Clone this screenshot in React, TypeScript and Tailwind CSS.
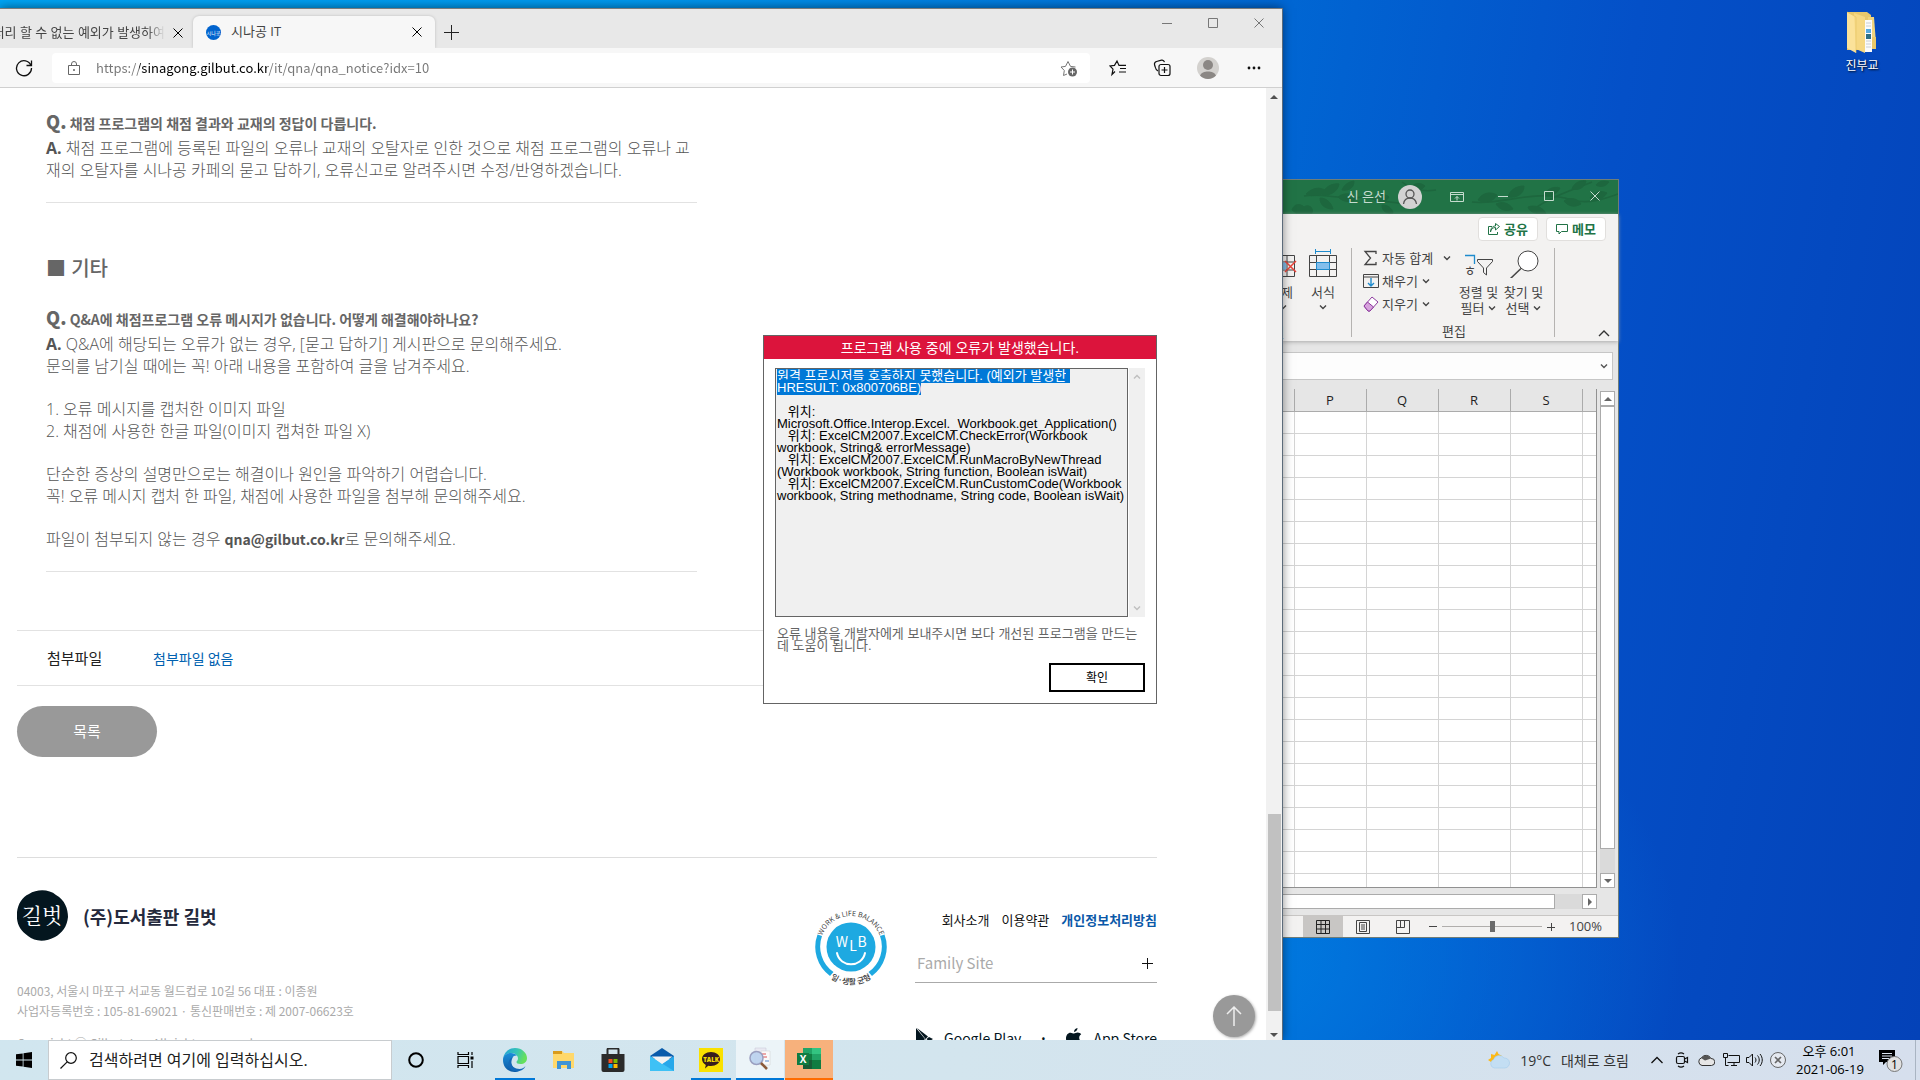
import React, { useEffect, useRef } from 'react';

const UI_FONT = "font-['Open_Sans','Noto_Sans_CJK_KR',sans-serif]";
const WEB_FONT = "font-['Noto_Sans_CJK_KR',sans-serif]";
const DIALOG_FONT = "font-['Liberation_Sans','Noto_Sans_CJK_KR',sans-serif]";

const selectedMessage = '원격 프로시저를 호출하지 못했습니다. (예외가 발생한\nHRESULT: 0x800706BE)';
const errorMessage = `${selectedMessage}

   위치:
Microsoft.Office.Interop.Excel._Workbook.get_Application()
   위치: ExcelCM2007.ExcelCM.CheckError(Workbook
workbook, String& errorMessage)
   위치: ExcelCM2007.ExcelCM.RunMacroByNewThread
(Workbook workbook, String function, Boolean isWait)
   위치: ExcelCM2007.ExcelCM.RunCustomCode(Workbook
workbook, String methodname, String code, Boolean isWait)`;

function Chevron({ className = '', up = false }: { className?: string; up?: boolean }) {
  return (
    <svg viewBox="0 0 8 6" className={`w-2 h-1.5 shrink-0 ${className}`} fill="none" stroke="currentColor" strokeWidth="1.4">
      <path d={up ? 'M1 4.5 4 1.5 7 4.5' : 'M1 1.5 4 4.5 7 1.5'} />
    </svg>
  );
}

function Triangle({ dir }: { dir: 'up' | 'down' | 'right' }) {
  const paths = { up: 'M4 2 8 6H0z', down: 'M4 6 0 2h8z', right: 'M2 0 6 4 2 8z' };
  return (
    <svg viewBox="0 0 8 8" className="w-2 h-2" fill="currentColor">
      <path d={paths[dir]} />
    </svg>
  );
}

function CloseIcon({ className = '' }: { className?: string }) {
  return (
    <svg viewBox="0 0 10 10" className={className} fill="none" stroke="currentColor">
      <path d="M0.5 0.5l9 9M9.5 0.5l-9 9" />
    </svg>
  );
}

function WindowButtons({ className = '' }: { className?: string }) {
  return (
    <div className={`flex ${className}`}>
      <button aria-label="최소화" className="w-[46px] h-7 grid place-items-center">
        <svg viewBox="0 0 10 10" className="w-2.5 h-2.5" stroke="currentColor"><path d="M0 5.5h10" /></svg>
      </button>
      <button aria-label="최대화" className="w-[46px] h-7 grid place-items-center">
        <svg viewBox="0 0 10 10" className="w-2.5 h-2.5" fill="none" stroke="currentColor"><path d="M.5.5h9v9h-9z" /></svg>
      </button>
      <button aria-label="닫기" className="w-[46px] h-7 grid place-items-center">
        <CloseIcon className="w-2.5 h-2.5" />
      </button>
    </div>
  );
}

function DesktopFolder() {
  return (
    <button className={`absolute right-5 top-2 w-[76px] flex flex-col items-center gap-0.5 text-white text-[12px] leading-4 ${UI_FONT}`}>
      <svg viewBox="0 0 34 48" className="w-[34px] h-12">
        <path d="M2 4h20l4 3v35H2z" fill="#e8c86c" />
        <path d="M23 9h6l2 26v6h-8z" fill="#f0d47e" />
        <path d="M20 12h7v32h-7z" fill="#fbfbfb" />
        <path d="M21 15h5M21 18h5M21 33h5M21 36h5M21 39h5" stroke="#c9ced4" />
        <path d="M21 21h5v4h-5z" fill="#57a9e0" />
        <path d="M21 26h5v5h-5z" fill="#2e6f86" />
        <path d="M27 29h4v12h-4z" fill="#e9c869" />
        <path d="M2 4 11 9v36L2 40z" fill="#fbe29a" />
        <path d="M9 5 20 9v36l-9-4z" fill="#f6d883" />
        <path d="M2 4 11 9v36" fill="none" stroke="#e4c263" strokeWidth=".6" />
      </svg>
      <span className="[text-shadow:1px_1px_2px_#000]">진부교</span>
    </button>
  );
}

function ExcelTitleBar() {
  return (
    <div className="relative h-[34px] bg-[#217346] text-[#c5dccf] flex items-start justify-end">
      <svg viewBox="0 0 336 34" className="absolute inset-0 w-full h-full" fill="#1d673e" stroke="#1d673e">
        <path d="M22 16c20-4 40 6 62 0M84 16c14 8 30 4 44 10M190 22c30 4 60-14 100-2 16 4 30 0 46-6M250 30c20-14 40-20 60-28M120 2c10 8 22 10 34 8" fill="none" strokeWidth="1.6" />
        <path d="M24 14c6-6 14-8 20-3-6 5-13 6-20 3zM40 15c2-7 9-12 17-11-1 7-8 12-17 11zM38 18c6 0 11 4 13 11-8 0-13-4-13-11zM56 17c7-5 14-4 19 2-7 4-14 3-19-2zM60 10c2-5 6-8 12-9 0 6-4 10-12 9zM10 30c2-6 8-7 12-3 4-3 10 0 8 6H14zM92 20c4-6 10-7 15-3-3 5-9 7-15 3zM100 25c6 0 10 3 11 8-7 1-11-2-11-8zM128 8c4-5 10-6 15-2-4 5-10 6-15 2z" />
        <path d="M196 20c4-7 12-9 19-5-4 7-12 9-19 5zM214 24c7-3 13-1 17 5-7 3-13 1-17-5zM226 17c2-7 8-11 16-11 0 8-7 12-16 11zM246 27c5-2 15-1 18 7-9 0-16-1-18-7zM262 15c3-6 9-9 16-7-3 6-9 9-16 7zM282 21c6-4 13-3 17 3-7 4-13 2-17-3zM290 9c2-6 8-9 14-8-1 6-7 10-14 8zM308 18c4-6 10-8 17-5-4 6-10 8-17 5zM314 5c3-4 8-5 13-3-3 4-8 6-13 3z" />
      </svg>
      <div className="relative flex items-center h-[34px]">
        <span className={`text-[13px] ${UI_FONT}`}>신 은선</span>
        <svg viewBox="0 0 24 24" className="w-6 h-6 ml-3">
          <circle cx="12" cy="12" r="12" fill="#d2d2d2" />
          <g fill="none" stroke="#555" strokeWidth="1.3"><circle cx="12" cy="9" r="4" /><path d="M5.5 19c.6-4 3-6 6.500-6s5.900 2 6.500 6" /></g>
        </svg>
        <svg viewBox="0 0 14 12" className="w-3.5 h-3 ml-7 mr-4" fill="none" stroke="currentColor">
          <path d="M.5 1.500h13v9H.5zM.5 3.500h13M7 9.500v-4M5 7.500l2-2 2 2" />
        </svg>
      </div>
      <WindowButtons className="relative pt-0.5" />
    </div>
  );
}

function Ribbon() {
  return (
    <div className={`h-[127px] bg-[#f3f2f1] text-[#444] text-[13px] leading-4 shadow-[0_1px_4px_#aaa] relative ${UI_FONT}`}>
      <div className="flex justify-end gap-2 pt-[3px] pr-3 text-[#217346] font-bold">
        <button className="w-[60px] h-6 bg-white border border-[#e1dfdd] rounded-sm flex items-center justify-center gap-1">
          <svg viewBox="0 0 12 12" className="w-3 h-3" fill="none" stroke="currentColor"><path d="M4 3.500H.5v8h9V9M2.500 9c.5-3 2.500-4.500 5-4.500V7l4-3.500L7.500.5V3C4 3 2.500 6 2.500 9z" /></svg>
          공유
        </button>
        <button className="w-[60px] h-6 bg-white border border-[#e1dfdd] rounded-sm flex items-center justify-center gap-1">
          <svg viewBox="0 0 12 12" className="w-3 h-3" fill="none" stroke="currentColor"><path d="M.5 1.500h11v7h-6L3 11V8.500H.5z" /></svg>
          메모
        </button>
      </div>
      <div className="flex h-[89px] mt-[7px]">
        <div className="w-[69px] relative flex">
          <div className="w-[17px] flex flex-col items-end overflow-hidden shrink-0">
            <svg viewBox="0 0 28 30" className="w-7 h-[30px] mr-0.5 shrink-0" fill="none">
              <path d="M.5 7.500h25v21H.5zM.5 14h25M.5 22h25M8 7v21M18 7v21" stroke="#444" />
              <path d="M8 14.500h9v7H8z" fill="#83beec" />
              <path d="M16 13l11 11M27 13 16 24" stroke="#e8443a" strokeWidth="1.500" />
            </svg>
            <span className="whitespace-nowrap mt-1.5 mr-1.5">삭제</span>
            <Chevron className="mt-1 mr-3" />
          </div>
          <button className="w-[48px] flex flex-col items-center">
            <svg viewBox="0 0 28 30" className="w-7 h-[30px]" fill="none">
              <path d="M.5 7.500h27v21H.5zM.5 14.500h27M.5 21.500h27M7.500 7v21M20.500 7v21" stroke="#444" />
              <path d="M7.500 14.500h13v7h-13z" fill="#83beec" stroke="#1e8bcd" />
              <path d="M6.500 1v5M21.500 1v5M6.500 3.500h15" stroke="#1e8bcd" />
            </svg>
            <span className="mt-1.5">서식</span>
            <Chevron className="mt-1" />
          </button>
          <span className="absolute bottom-[-3px] -left-2.5">셀</span>
        </div>
        <div className="w-[204px] border-x border-[#b5b3b1] flex flex-col justify-between pl-2.5 pr-2">
          <div className="flex justify-between">
            <div className="flex flex-col gap-[7px] pt-0.5">
              <button className="flex items-center h-4 whitespace-nowrap">
                <svg viewBox="0 0 18 16" className="w-[18px] h-4 mr-0.5 shrink-0" fill="none" stroke="#444" strokeWidth="1.300"><path d="M14 4V1.500H3L8.500 8 3 14.500h11V12" /></svg>
                자동 합계
                <Chevron className="ml-2.5" />
              </button>
              <button className="flex items-center h-4">
                <svg viewBox="0 0 18 16" className="w-[18px] h-4 mr-0.5" fill="none"><path d="M1.500 1.500h15v13h-15zM1.500 4h15" stroke="#444" /><path d="M9 5v8M6 10l3 3 3-3" stroke="#1e8bcd" strokeWidth="1.400" /></svg>
                채우기
                <Chevron className="ml-1" />
              </button>
              <button className="flex items-center h-4">
                <svg viewBox="0 0 18 16" className="w-[18px] h-4 mr-0.5"><path d="M2 10l8-9 6 5-8 9H6z" fill="#fff" stroke="#8c3a9e" /><path d="M2 10l3.500-4 6 5L8 15H6z" fill="#d7a3dd" stroke="#8c3a9e" /></svg>
                지우기
                <Chevron className="ml-1" />
              </button>
            </div>
            <div className="flex">
              <button className="w-[45px] flex flex-col items-center">
                <svg viewBox="0 0 30 30" className="w-[30px] h-[30px]" fill="none">
                  <path d="M1 7.500h9.500V16" stroke="#1e8bcd" strokeWidth="1.300" />
                  <path d="M13.500 11.500h15v2l-6 6.500v7l-3-2.500V20l-6-6.500z" stroke="#444" />
                  <text x="0" y="27" fontSize="13" fill="#444">ㅎ</text>
                </svg>
                <span className="mt-1.5 whitespace-nowrap">정렬 및</span>
                <span className="flex items-center gap-1 whitespace-nowrap">필터 <Chevron /></span>
              </button>
              <button className="w-[45px] flex flex-col items-center">
                <svg viewBox="0 0 30 30" className="w-[30px] h-[30px]" fill="none" stroke="#444"><circle cx="19" cy="13" r="10" fill="#fff" /><path d="M12 20.500 1 31" strokeWidth="1.500" /></svg>
                <span className="mt-1.5 whitespace-nowrap">찾기 및</span>
                <span className="flex items-center gap-1 whitespace-nowrap">선택 <Chevron /></span>
              </button>
            </div>
          </div>
          <div className="text-center h-3.5">편집</div>
        </div>
        <button aria-label="리본 메뉴 축소" className="ml-auto mr-2 self-end">
          <svg viewBox="0 0 12 8" className="w-3 h-2" fill="none" stroke="#333" strokeWidth="1.400"><path d="M1 7l5-5 5 5" /></svg>
        </button>
      </div>
    </div>
  );
}

function ScrollArrow({ dir }: { dir: 'up' | 'down' | 'right' }) {
  return (
    <button aria-label={dir} className="w-[15px] h-[15px] shrink-0 bg-white border border-[#ababab] text-[#666] grid place-items-center">
      <Triangle dir={dir} />
    </button>
  );
}

function Sheet() {
  const columns = ['', 'P', 'Q', 'R', 'S', ''];
  const rows = Array.from({ length: 22 });
  return (
    <div className="flex pr-[3px] mt-[9px]">
      <div className="h-[499px] w-[315px] overflow-hidden border-r border-b border-[#919191]">
        <table className={`table-fixed border-collapse w-[315px] ${UI_FONT}`}>
          <colgroup>
            <col className="w-3" />
            <col className="w-[72px]" />
            <col className="w-[72px]" />
            <col className="w-[72px]" />
            <col className="w-[72px]" />
            <col />
          </colgroup>
          <thead>
            <tr className="h-[22px]">
              {columns.map((name, i) => (
                <th key={i} className="border-r border-b border-[#ababab] last:border-r-0 text-[13px] leading-4 font-normal p-0 text-[#222]">{name}</th>
              ))}
            </tr>
          </thead>
          <tbody>
            {rows.map((_, r) => (
              <tr key={r} className="h-[22px] bg-white">
                {columns.map((_, i) => (
                  <td key={i} className="border-r border-b border-[#d4d4d4] last:border-r-0 p-0" />
                ))}
              </tr>
            ))}
          </tbody>
        </table>
      </div>
      <div className="ml-[3px] mt-0.5 w-[15px] bg-[#dadada] flex flex-col justify-between">
        <div className="flex flex-col">
          <ScrollArrow dir="up" />
          <div className="h-[443px] bg-white border border-[#ababab]" />
        </div>
        <ScrollArrow dir="down" />
      </div>
    </div>
  );
}

function ExcelWindow() {
  return (
    <section className="absolute left-[1282px] top-[179px] w-[337px] border border-l-0 border-[#6f7d78] bg-[#e6e6e6]">
      <ExcelTitleBar />
      <Ribbon />
      <div className="mt-[11px] mr-[5px] h-[28px] bg-[#fdfdfd] border border-l-0 border-[#c6c6c6] flex items-center justify-end pr-1 text-[#555]">
        <Chevron />
      </div>
      <Sheet />
      <div className="flex mt-1.5 mb-1.5">
        <div className="w-[273px] bg-white border border-l-0 border-[#ababab]" />
        <div className="w-[27px] bg-[#dadada]" />
        <ScrollArrow dir="right" />
      </div>
      <div className={`h-[22px] border-t border-[#c8c6c4] bg-[#f3f2f1] flex items-center text-[#444] text-[13px] pl-[21px] ${UI_FONT}`}>
        <button aria-label="기본" className="w-10 h-full bg-[#c8c6c4] grid place-items-center">
          <svg viewBox="0 0 14 14" className="w-3.5 h-3.5" fill="none" stroke="#222"><path d="M.5.5h13v13H.5zM.5 4.500h13M.5 9h13M5 .5v13M9.500.5v13" /></svg>
        </button>
        <button aria-label="페이지 레이아웃" className="w-10 h-full grid place-items-center">
          <svg viewBox="0 0 14 14" className="w-3.5 h-3.5" fill="none" stroke="#444"><path d="M.5.5h13v13H.5zM3.500 2.500h7v9h-7zM5 5h4M5 7h4M5 9h4" /></svg>
        </button>
        <button aria-label="페이지 나누기 미리 보기" className="w-10 h-full grid place-items-center">
          <svg viewBox="0 0 14 14" className="w-3.5 h-3.5" fill="none" stroke="#444"><path d="M.5.5h13v13H.5zM4.500.5v7M8.500.5v7M.5 7.500h8" /></svg>
        </button>
        <button aria-label="축소" className="ml-1.5 w-2 h-px bg-[#444]" />
        <input
          type="range"
          aria-label="확대/축소"
          defaultValue="50"
          className="appearance-none mx-[5px] w-[100px] h-px bg-[#b0aeac] [&::-webkit-slider-thumb]:appearance-none [&::-webkit-slider-thumb]:w-[5px] [&::-webkit-slider-thumb]:h-[11px] [&::-webkit-slider-thumb]:bg-[#6b6b6b]"
        />
        <button aria-label="확대">
          <svg viewBox="0 0 8 8" className="w-2 h-2" stroke="#444"><path d="M0 4.500h8M4.500 0v8" /></svg>
        </button>
        <span className="ml-3.5">100%</span>
      </div>
    </section>
  );
}

function BrowserTabs() {
  return (
    <div className={`h-10 border-t border-[#7b7b7b] bg-[#e8e8e8] flex items-end text-[13px] text-[#444] shrink-0 ${UI_FONT}`}>
      <div className="w-[193px] h-[31px] flex items-center justify-end pr-2.5 overflow-hidden">
        <span className="whitespace-nowrap mask-r-from-90% mask-r-to-100%">처리 할 수 없는 예외가 발생하여</span>
        <button aria-label="탭 닫기" className="ml-2"><CloseIcon className="w-2.5 h-2.5 text-black" /></button>
      </div>
      <div className="w-[242px] h-[32px] bg-[#f7f7f7] rounded-t-md shadow-[0_0_3px_#bbb] flex items-center px-[13px] [clip-path:inset(-4px_-4px_0_-4px)]">
        <svg viewBox="0 0 15 15" className="w-[15px] h-[15px]">
          <circle cx="7.500" cy="7.500" r="7.500" fill="#0063ce" />
          <text x="7.500" y="9.500" fontSize="5" fill="#fff" textAnchor="middle">시나공</text>
        </svg>
        <span className="ml-2.5">시나공 IT</span>
        <button aria-label="탭 닫기" className="ml-auto"><CloseIcon className="w-2.5 h-2.5 text-black" /></button>
      </div>
      <button aria-label="새 탭" className="w-8 h-[32px] grid place-items-center">
        <svg viewBox="0 0 15 15" className="w-[15px] h-[15px]" stroke="#222"><path d="M0 7.500h15M7.500 0v15" /></svg>
      </button>
      <WindowButtons className="ml-auto self-start text-[#777]" />
    </div>
  );
}

function AddressBar() {
  return (
    <div className="h-10 bg-[#f7f7f7] border-b border-[#d0d0d0] flex items-center shrink-0 text-[#222]">
      <button aria-label="새로 고침" className="w-[52px] pr-1 grid place-items-center">
        <svg viewBox="0 0 18 18" className="w-[18px] h-[18px]" fill="none" stroke="#111" strokeWidth="1.300"><path d="M16 6.500A7.500 7.500 0 1 0 16.500 9M16.500 1.500v5h-5" /></svg>
      </button>
      <div className="flex-1 h-[30px] bg-white rounded flex items-center pl-[15px] pr-3">
        <svg viewBox="0 0 14 16" className="w-3.5 h-4" fill="none" stroke="#666"><path d="M1.500 5.500h11v9h-11zM4.500 5.500V4a2.500 2.500 0 0 1 5 0v1.500" /><circle cx="7" cy="10" r=".6" fill="#666" /></svg>
        <input
          aria-label="주소"
          defaultValue="https://sinagong.gilbut.co.kr/it/qna/qna_notice?idx=10"
          className={`flex-1 ml-[15px] text-[13px] text-transparent bg-clip-text bg-[linear-gradient(90deg,#767676_43px,#000_43px,#000_171px,#767676_171px)] outline-none ${WEB_FONT}`}
        />
        <svg viewBox="0 0 18 18" className="w-[18px] h-[18px]" fill="none" stroke="#777">
          <path d="M7 15l-3.500 1.500.8-5L1 8l4.500-.6L8 2.500l2.500 4.900L15.500 8" />
          <circle cx="12.500" cy="13" r="4.500" fill="#666" stroke="none" /><path d="M12.500 10.500v5M10 13h5" stroke="#fff" />
        </svg>
      </div>
      <div className="flex items-center pl-[19px] pr-[21px]">
        <svg viewBox="0 0 18 18" className="w-[18px] h-[18px]" fill="none" stroke="#111" strokeWidth="1.200"><path d="M6 12.500 3 15.500l1-5.300L1 7l4.500-.6L8 2l2 4.400h7M11 9.500h6M10 13h7" /></svg>
        <svg viewBox="0 0 18 18" className="w-[18px] h-[18px] ml-[26px]" fill="none" stroke="#111" strokeWidth="1.200"><path d="M5 12C3 11 2.500 9.500 2.200 8L1.500 5.500C1.200 4 2 3 3.500 2.500l5-1.300c1.500-.3 2.500.3 3 2" /><rect x="6" y="5.500" width="11" height="11" rx="2" /><path d="M11.500 8v6M8.500 11h6" /></svg>
        <svg viewBox="0 0 22 22" className="w-[22px] h-[22px] ml-[26px]"><circle cx="11" cy="11" r="11" fill="#d3d1ce" /><circle cx="11" cy="8" r="5" fill="#8b8784" /><path d="M3 18.500c2-5.500 14-5.500 16 0a11 11 0 0 1-16 0z" fill="#8b8784" /></svg>
        <svg viewBox="0 0 14 4" className="w-3.5 h-1 ml-[28px]" fill="#111"><circle cx="2" cy="2" r="1.400" /><circle cx="7" cy="2" r="1.400" /><circle cx="12" cy="2" r="1.400" /></svg>
      </div>
    </div>
  );
}

function Article() {
  return (
    <article className={`text-[#555] text-[16px] leading-[22px] font-light ${UI_FONT}`}>
      <div className="ml-[29px] w-[651px] pb-[21px] border-b border-[#e2e2e2]">
        <h3 className={`h-7 text-[14px] leading-7 font-bold text-[#666] ${WEB_FONT}`}><b className="text-[18px] leading-none">Q.</b> 채점 프로그램의 채점 결과와 교재의 정답이 다릅니다.</h3>
        <p className="whitespace-nowrap">
          <b className="font-bold">A.</b> 채점 프로그램에 등록된 파일의 오류나 교재의 오탈자로 인한 것으로 채점 프로그램의 오류나 교<br />
          재의 오탈자를 시나공 카페의 묻고 답하기, 오류신고로 알려주시면 수정/반영하겠습니다.
        </p>
      </div>
      <div className="ml-[29px] w-[651px] pb-[21px] border-b border-[#e2e2e2]">
        <h2 className="h-7 mt-[52px] mb-[22px] text-[20px] leading-7 font-medium text-[#666]">■ 기타</h2>
        <h3 className={`h-7 text-[14px] leading-7 font-bold text-[#666] ${WEB_FONT}`}><b className="text-[18px] leading-none">Q.</b> Q&amp;A에 채점프로그램 오류 메시지가 없습니다. 어떻게 해결해야하나요?</h3>
        <p>
          <b className="font-bold">A.</b> Q&amp;A에 해당되는 오류가 없는 경우, [묻고 답하기] 게시판으로 문의해주세요.<br />
          문의를 남기실 때에는 꼭! 아래 내용을 포함하여 글을 남겨주세요.
        </p>
        <p className="mt-[21px]">
          1. 오류 메시지를 캡처한 이미지 파일<br />
          2. 채점에 사용한 한글 파일(이미지 캡쳐한 파일 X)
        </p>
        <p className="mt-[21px]">
          단순한 증상의 설명만으로는 해결이나 원인을 파악하기 어렵습니다.<br />
          꼭! 오류 메시지 캡처 한 파일, 채점에 사용한 파일을 첨부해 문의해주세요.
        </p>
        <p className="h-[22px] mt-[21px]">파일이 첨부되지 않는 경우 <b className={`text-[14px] leading-none font-bold ${WEB_FONT}`}>qna@gilbut.co.kr</b>로 문의해주세요.</p>
      </div>
    </article>
  );
}

function WlbBadge() {
  return (
    <svg viewBox="0 0 76 80" className="w-[76px] h-20 mt-[50px]" aria-label="WLB">
      <defs>
        <path id="wlb-top" d="M7 39a31 31 0 0 1 62 0" />
        <path id="wlb-bottom" d="M12 66a37 37 0 0 0 52 0" />
      </defs>
      <circle cx="38" cy="39" r="24.500" fill="#1ea9e1" />
      <path d="M4.500 26.500A36 36 0 0 0 17 68l3.500-4A31 31 0 0 1 9 28zM71.500 26.500A36 36 0 0 1 59 68l-3.500-4A31 31 0 0 0 67 28z" fill="#1ea9e1" />
      <text fontSize="14" fill="#fff" textAnchor="middle"><tspan x="29" y="39">W</tspan><tspan x="40" y="43">L</tspan><tspan x="49" y="39">B</tspan></text>
      <path d="M24 45c3 15 25 15 28 0" fill="none" stroke="#fff" strokeWidth="2" strokeLinecap="round" />
      <text fontSize="7" fill="#444"><textPath href="#wlb-top" startOffset="50%" textAnchor="middle">WORK &amp; LIFE BALANCE</textPath></text>
      <text fontSize="8" fill="#333" fontWeight="500"><textPath href="#wlb-bottom" startOffset="50%" textAnchor="middle">일·생활 균형</textPath></text>
    </svg>
  );
}

function PageFooter() {
  return (
    <footer className="mt-[100px] border-t border-[#ddd] flex justify-between">
      <div className="pt-8">
        <div className="flex items-center">
          <svg viewBox="0 0 51 51" className="w-[51px] h-[51px]">
            <path d="M12 4C20-1 32-1 39 5c9 5 12 14 12 22-1 10-6 16-13 20-9 5-20 5-27-1C2 40-1 32 0 22 1 14 5 7 12 4z" fill="#04161f" />
            <text x="25" y="33" fontSize="21" fill="#fff" textAnchor="middle" className="font-['Noto_Serif_CJK_KR','Noto_Sans_CJK_KR',serif]">길벗</text>
          </svg>
          <strong className="ml-[15px] text-[18px] leading-6 font-bold text-[#252a3d]">(주)도서출판 길벗</strong>
        </div>
        <p className="mt-10 text-[12px] leading-5 text-[#aaa]">
          04003, 서울시 마포구 서교동 월드컵로 10길 56 대표 : 이종원<br />
          사업자등록번호 : 105-81-69021 · 통신판매번호 : 제 2007-06623호
        </p>
        <p className="mt-3 text-[12px] leading-5 text-[#aaa]">Copyright ⓒ Gilbut, Inc. All rights reserved.</p>
      </div>
      <div className="flex gap-[26px]">
        <WlbBadge />
        <div className="w-[242px] pt-[52px]">
          <nav className="flex justify-end gap-3 text-[13px] leading-5 text-[#111]">
            <a href="#company">회사소개</a>
            <a href="#terms">이용약관</a>
            <a href="#privacy" className="font-bold text-[#0a58a8]">개인정보처리방침</a>
          </nav>
          <button className="mt-[14px] w-full h-[39px] border-b border-[#aaa] flex items-center justify-between pl-0.5 pr-1 text-[15px] text-[#aaa]">
            Family Site
            <svg viewBox="0 0 11 11" className="w-[11px] h-[11px]" stroke="#111"><path d="M0 5.500h11M5.500 0v11" /></svg>
          </button>
          <div className="mt-[45px] flex items-center justify-between text-[14px] leading-5 text-[#04161f]">
            <a href="#google" className="flex items-center gap-2.5 pl-px">
              <svg viewBox="0 0 18 20" className="w-[18px] h-5" fill="currentColor"><path d="M1 0 12 8.500 9.500 11zM0 0v20l9-9zM13 9l4 2-4 2.500-2.500-2.500zM1 20l8.500-8.500L12 14z" /></svg>
              Google Play
            </a>
            <span className="font-bold">·</span>
            <a href="#apple" className="flex items-center gap-2.5">
              <svg viewBox="0 0 18 20" className="w-[18px] h-5" fill="currentColor"><path d="M12.500 0c.2 2-1.500 4-3.500 4 0-2 1.500-3.700 3.500-4zM9 5.500c1 0 2-1 3.700-1 1.500 0 2.800.8 3.500 1.800-3 2-2.500 6 .6 7.300C16 16 14.500 19 12.700 19c-1.200 0-1.700-.7-3.200-.7S7.500 19 6.300 19C3.500 19 1 14 1 10.500 1 7 3 4.700 5.500 4.700 7 4.700 8 5.500 9 5.500z" /></svg>
              App Store
            </a>
          </div>
        </div>
      </div>
    </footer>
  );
}

function BrowserWindow() {
  return (
    <section className="absolute left-0 top-2 bottom-0 w-[1283px] bg-white flex flex-col overflow-hidden border-r border-[#5c6b7a]">
      <BrowserTabs />
      <AddressBar />
      <div className="flex-1 min-h-0 flex relative">
        <main className={`flex-1 overflow-hidden pl-[17px] pr-[109px] pt-[21px] ${WEB_FONT}`}>
          <Article />
          <dl className="mt-[58px] h-14 border-y border-[#e2e2e2] flex items-center pl-[30px]">
            <dt className="text-[15px] w-[106px] text-[#222]">첨부파일</dt>
            <dd className="text-[14px] text-[#0061b0]">첨부파일 없음</dd>
          </dl>
          <button className="mt-5 w-[140px] h-[51px] rounded-full bg-[#999] text-white text-[15px]">목록</button>
          <PageFooter />
        </main>
        <button aria-label="맨 위로" className="absolute right-[27px] bottom-[3px] w-[42px] h-[42px] rounded-full bg-[#999] shadow-[1px_1px_3px_#aaa] grid place-items-center">
          <svg viewBox="0 0 16 20" className="w-4 h-5" fill="none" stroke="#eee" strokeWidth="1.500"><path d="M8 20V1M1 8l7-7 7 7" /></svg>
        </button>
        <div className="w-4 bg-[#f1f1f1] flex flex-col items-center text-[#505050] pt-[5px] pb-px">
          <Triangle dir="up" />
          <div className="flex-1 w-[13px] flex flex-col justify-end pb-[20px]">
            <div className="h-[197px] bg-[#c1c1c1]" />
          </div>
          <Triangle dir="down" />
        </div>
      </div>
    </section>
  );
}

function ErrorDialog() {
  const logRef = useRef<HTMLTextAreaElement>(null);

  useEffect(() => {
    logRef.current?.focus();
    logRef.current?.setSelectionRange(0, selectedMessage.length);
  }, []);

  return (
    <section role="dialog" aria-labelledby="error-title" className={`absolute left-[763px] top-[335px] w-[394px] border border-[#646464] bg-white text-[13px] leading-3 ${DIALOG_FONT}`}>
      <h1 id="error-title" className="h-[23px] bg-[#dc143c] text-white text-[14px] flex items-center justify-center">프로그램 사용 중에 오류가 발생했습니다.</h1>
      <div className="flex mt-[9px] ml-[11px] mr-[11px] justify-between">
        <textarea
          ref={logRef}
          readOnly
          aria-label="오류 내용"
          defaultValue={errorMessage}
          className="w-[353px] h-[249px] bg-[#f0f0f0] border border-[#646464] text-black pl-px pt-px resize-none overflow-hidden whitespace-pre outline-none selection:bg-[#0078d7] selection:text-white"
        />
        <div className="w-4 bg-[#f0f0f0] text-[#bfbfbf] flex flex-col items-center justify-between py-1.5">
          <Chevron up />
          <Chevron />
        </div>
      </div>
      <p className="mt-[11px] ml-[13px] text-[#646464] whitespace-nowrap">
        오류 내용을 개발자에게 보내주시면 보다 개선된 프로그램을 만드는<br />데 도움이 됩니다.
      </p>
      <div className="flex justify-end mt-[11px] mr-[11px] mb-[11px]">
        <button className="w-24 h-[29px] border-2 border-black text-black text-[12px]">확인</button>
      </div>
    </section>
  );
}

function TaskItem({ label, className = '', children }: { label: string; className?: string; children: React.ReactNode }) {
  return (
    <button aria-label={label} className={`w-12 h-10 mr-px shrink-0 grid place-items-center ${className}`}>
      {children}
    </button>
  );
}

function Taskbar() {
  return (
    <footer className={`relative h-10 shrink-0 flex items-center bg-linear-to-r from-[#d1e6ef] via-[#d3e5ee] to-[#d6dfed] text-black ${UI_FONT}`}>
      <button aria-label="시작" className="w-12 h-10 grid place-items-center">
        <svg viewBox="0 0 16 16" className="w-4 h-4"><path d="M0 2.300 6.700 1.400v6.200H0zM7.500 1.200 16 0v7.600H7.500zM0 8.400h6.700v6.200L0 13.700zM7.500 8.400H16V16l-8.500-1.200z" /></svg>
      </button>
      <label className="w-[344px] h-10 bg-white border border-[#c8cccf] flex items-center pl-[11px]">
        <svg viewBox="0 0 17 17" className="w-[17px] h-[17px]" fill="none" stroke="#111" strokeWidth="1.200"><circle cx="11" cy="6" r="5.300" /><path d="M7.200 9.800.5 16.500" /></svg>
        <input type="text" aria-label="검색" placeholder="검색하려면 여기에 입력하십시오." className="flex-1 ml-3 text-[16px] outline-none placeholder:text-[#222]" />
      </label>
      <TaskItem label="Cortana">
        <svg viewBox="0 0 16 16" className="w-4 h-4" fill="none" stroke="#000" strokeWidth="2"><circle cx="8" cy="8" r="6.800" /></svg>
      </TaskItem>
      <TaskItem label="작업 보기">
        <svg viewBox="0 0 17 16" className="w-[17px] h-4" fill="none" stroke="#000" strokeWidth="1.200"><path d="M1 4.500h10.500v7H1zM1 0v2.500h10.500V0M1 16v-2.500h10.500V16M15 0v3M15 9v7" /><path d="M13.500 4.500h3v3h-3z" fill="#000" stroke="none" /></svg>
      </TaskItem>
      <TaskItem label="Microsoft Edge" className="ml-px">
        <svg viewBox="0 0 24 24" className="w-6 h-6">
          <defs>
            <linearGradient id="edge-a" x1="0" y1="0" x2="1" y2=".3"><stop stopColor="#1f9fdd" /><stop offset=".6" stopColor="#37c5b4" /><stop offset="1" stopColor="#66e05c" /></linearGradient>
            <linearGradient id="edge-b" x1="0" y1="0" x2="0" y2="1"><stop stopColor="#1b8ed9" /><stop offset="1" stopColor="#0c59a4" /></linearGradient>
          </defs>
          <path d="M0 11C1 4 6 0 12 0c7 0 12 5 12 10 0 4-3 6-6.500 6-3 0-4-1-4-2s1.500-1.500 1.500-3.500C15 7 11.500 5 8 5c-4 0-7 2.500-8 6z" fill="url(#edge-a)" />
          <path d="M0 12c0-4 3.500-7 8-7 2.500 0 4.500 1 6 2.500C10 7 8 10.500 8 14c0 5 4 8 9 8-1.500 1.500-3.500 2-5.500 2C5 24 0 19 0 12z" fill="url(#edge-b)" />
          <path d="M8.500 13c-1 5 3.500 8 8 8 3 0 5-1.500 6-3-1 3-5 5.500-9 5.500-5 0-8.500-4-8-8.500.3-3 2-5 5-6.500-1 1-1.700 2.500-2 4.500z" fill="#1469b8" />
        </svg>
      </TaskItem>
      <TaskItem label="파일 탐색기">
        <svg viewBox="0 0 22 20" className="w-[22px] h-5"><path d="M0 1h9l2 2h10v15H0z" fill="#ffd86b" /><path d="M0 1h9v3H0z" fill="#d99b1c" /><path d="M4 11h14v8h-4v-4H8v4H4z" fill="#3f94d6" /></svg>
      </TaskItem>
      <TaskItem label="Microsoft Store">
        <svg viewBox="0 0 24 24" className="w-6 h-6"><path d="M6.500 7V1.500C6.500.8 7 .5 7.500.5h9c.6 0 1 .3 1 1V7" fill="none" stroke="#2b2b2b" strokeWidth="2" /><path d="M.5 6h23v16a2 2 0 0 1-2 2h-19a2 2 0 0 1-2-2z" fill="#2b2b2b" /><path d="M7.500 11h4v4h-4z" fill="#f25022" /><path d="M12.500 11h4v4h-4z" fill="#7fba00" /><path d="M7.500 16h4v4h-4z" fill="#00a4ef" /><path d="M12.500 16h4v4h-4z" fill="#ffb900" /></svg>
      </TaskItem>
      <TaskItem label="메일">
        <svg viewBox="0 0 24 24" className="w-6 h-6"><path d="M0 8 12 0l12 8v3H0z" fill="#0a5bab" /><path d="M0 8v15h24V8L12 16z" fill="#28a8ea" /><path d="M0 8v15h24z" fill="#3ec1f5" /><path d="M1.500 8.500h21L12 16z" fill="#f3f3f3" /></svg>
      </TaskItem>
      <TaskItem label="카카오톡">
        <svg viewBox="0 0 24 24" className="w-6 h-6"><path d="M0 0h24v24H0z" fill="#fae100" /><path d="M12 4c5 0 9 3 9 7s-4 7-9 7c-.8 0-2 0-2.700-.3L6 20.500l.8-3.600C4.500 15.700 3 13.500 3 11c0-4 4-7 9-7z" fill="#371d1e" /><text x="12" y="13.500" fontSize="6" fontWeight="800" fill="#fae100" textAnchor="middle">TALK</text></svg>
      </TaskItem>
      <TaskItem label="채점 프로그램" className="bg-[#ecf4f8] border-b-2 border-[#0078d7]">
        <svg viewBox="0 0 24 24" className="w-6 h-6"><path d="M7 1h11v15H7z" fill="#e9e9f2" stroke="#c5c5d5" strokeWidth=".5" /><path d="M13 4h9v14h-9z" fill="#fafafa" stroke="#ccc" strokeWidth=".5" /><path d="M14 7h4M14 10h5" stroke="#d55" /><path d="M17 14h4" stroke="#58c" /><circle cx="8.500" cy="11" r="6.500" fill="#b7d0ef" fillOpacity=".85" stroke="#9a9fc0" strokeWidth="1.500" /><path d="m13 16 6 6" stroke="#8b5a3a" strokeWidth="2.600" /></svg>
      </TaskItem>
      <TaskItem label="Excel" className="bg-[#f7b17c] border-b-2 border-[#ff6c00]">
        <svg viewBox="0 0 24 24" className="w-6 h-6"><path d="M6 1h9v7H6z" fill="#21a366" /><path d="M15 1h9v6h-9z" fill="#33c481" /><path d="M6 7h9v6H6z" fill="#107c41" /><path d="M15 7h9v6h-9z" fill="#21a366" /><path d="M6 13h9v9H6z" fill="#185c37" /><path d="M15 13h9v9h-9z" fill="#107c41" /><path d="M0 6h12v12H0z" fill="#107c41" /><text x="6" y="15.500" fontSize="10" fontWeight="700" fill="#fff" textAnchor="middle">X</text></svg>
      </TaskItem>
      <div className="absolute left-[495px] bottom-0 w-10 h-0.5 bg-[#0078d7]" />
      <div className="absolute left-[691px] bottom-0 w-10 h-0.5 bg-[#0078d7]" />

      <div className="ml-auto flex items-center h-full">
        <svg viewBox="0 0 22 18" className="w-[22px] h-[18px]"><path d="M9 0l1.500 3L14 5l-2 4-9 2-3-2 3-2 0-4 3.500 1z" fill="#fbb917" /><path d="M6 17a4.500 4.500 0 0 1-.5-8.500A6 6 0 0 1 16 7a5 5 0 0 1 1 10z" fill="#c3def3" stroke="#9cc8ea" strokeWidth=".5" /></svg>
        <span className="ml-2.5 text-[14px] text-[#333]">19°C</span>
        <span className="ml-2.5 text-[14px] text-[#333]">대체로 흐림</span>
        <svg viewBox="0 0 12 8" className="w-3 h-2 ml-[22px]" fill="none" stroke="#111" strokeWidth="1.300"><path d="M.5 7 6 1.500 11.500 7" /></svg>
        <svg viewBox="0 0 14 16" className="w-3.5 h-4 ml-3" fill="none" stroke="#111" strokeWidth="1.200"><rect x="1.500" y="4.500" width="8" height="7" rx="1.500" /><path d="m9.500 7 3-1.500v5l-3-1.500M3 2c2-1.500 4-1.500 6 0M3 14c2 1.500 4 1.500 6 0" /></svg>
        <svg viewBox="0 0 18 12" className="w-[18px] h-3 ml-2"><path d="M5 11.500a4 4 0 0 1-.5-7.700A5.500 5.500 0 0 1 14 4.500a3.500 3.500 0 0 1 .5 7z" fill="#e6e6e6" stroke="#333" /><path d="M4 4a6 6 0 0 1 10 .5l-6 2z" fill="#555" /></svg>
        <svg viewBox="0 0 17 14" className="w-[17px] h-3.5 ml-2" fill="none" stroke="#111"><path d="M5.500 2.500h11v7h-12M8 12.500h6M11 9.500v3M.5.500h4v4h-4zM2.500 4.500v8h3" /></svg>
        <svg viewBox="0 0 18 14" className="w-[18px] h-3.5 ml-1.5" fill="none" stroke="#111"><path d="M.5 4.500H3L6.500 1v12L3 9.500H.5zM9 4.500c1.300 1.500 1.300 3.500 0 5M11.500 2.500c2.300 2.500 2.300 6.500 0 9M14 1c3 3.500 3 8.500 0 12" /></svg>
        <svg viewBox="0 0 16 16" className="w-4 h-4 ml-1.5" fill="none" stroke="#666"><circle cx="8" cy="8" r="7.500" fill="#e5e9f0" /><path d="m5 5 6 6M11 5l-6 6" strokeWidth="1.600" /></svg>
        <div className="ml-2.5 w-[66px] text-center text-[13px] leading-[18px] whitespace-nowrap">
          <div>오후 6:01</div>
          <div>2021-06-19</div>
        </div>
        <button aria-label="알림" className="relative ml-[17px] mr-[12px] w-6 h-6">
          <svg viewBox="0 0 24 24" className="w-6 h-6"><path d="M0 2h16v12H7l-3 3v-3H0z" /><path d="M3 5.500h10M3 8h10M3 10.500h7" stroke="#dde4ee" /><circle cx="15.500" cy="16" r="7.500" fill="#e1e1e1" stroke="#777" /><text x="15.500" y="20.500" fontSize="12" textAnchor="middle">1</text></svg>
        </button>
        <div className="h-full w-[5px] border-l border-[#a9b4c2]" />
      </div>
    </footer>
  );
}

export default function App() {
  return (
    <div className="h-screen w-full flex flex-col overflow-hidden">
      <div className="relative flex-1 min-h-0 overflow-hidden bg-[radial-gradient(ellipse_at_64%_92%,#007be0_0%,transparent_26%),linear-gradient(100deg,#00a4f4_0%,#0098ee_30%,#0068d4_60%,#0450c8_78%,#0442b8_100%)]">
        <DesktopFolder />
        <ExcelWindow />
        <div className="absolute left-0 top-2 bottom-0 w-[1282px] shadow-[0_0_10px_#0008]" />
        <BrowserWindow />
        <ErrorDialog />
      </div>
      <Taskbar />
    </div>
  );
}
